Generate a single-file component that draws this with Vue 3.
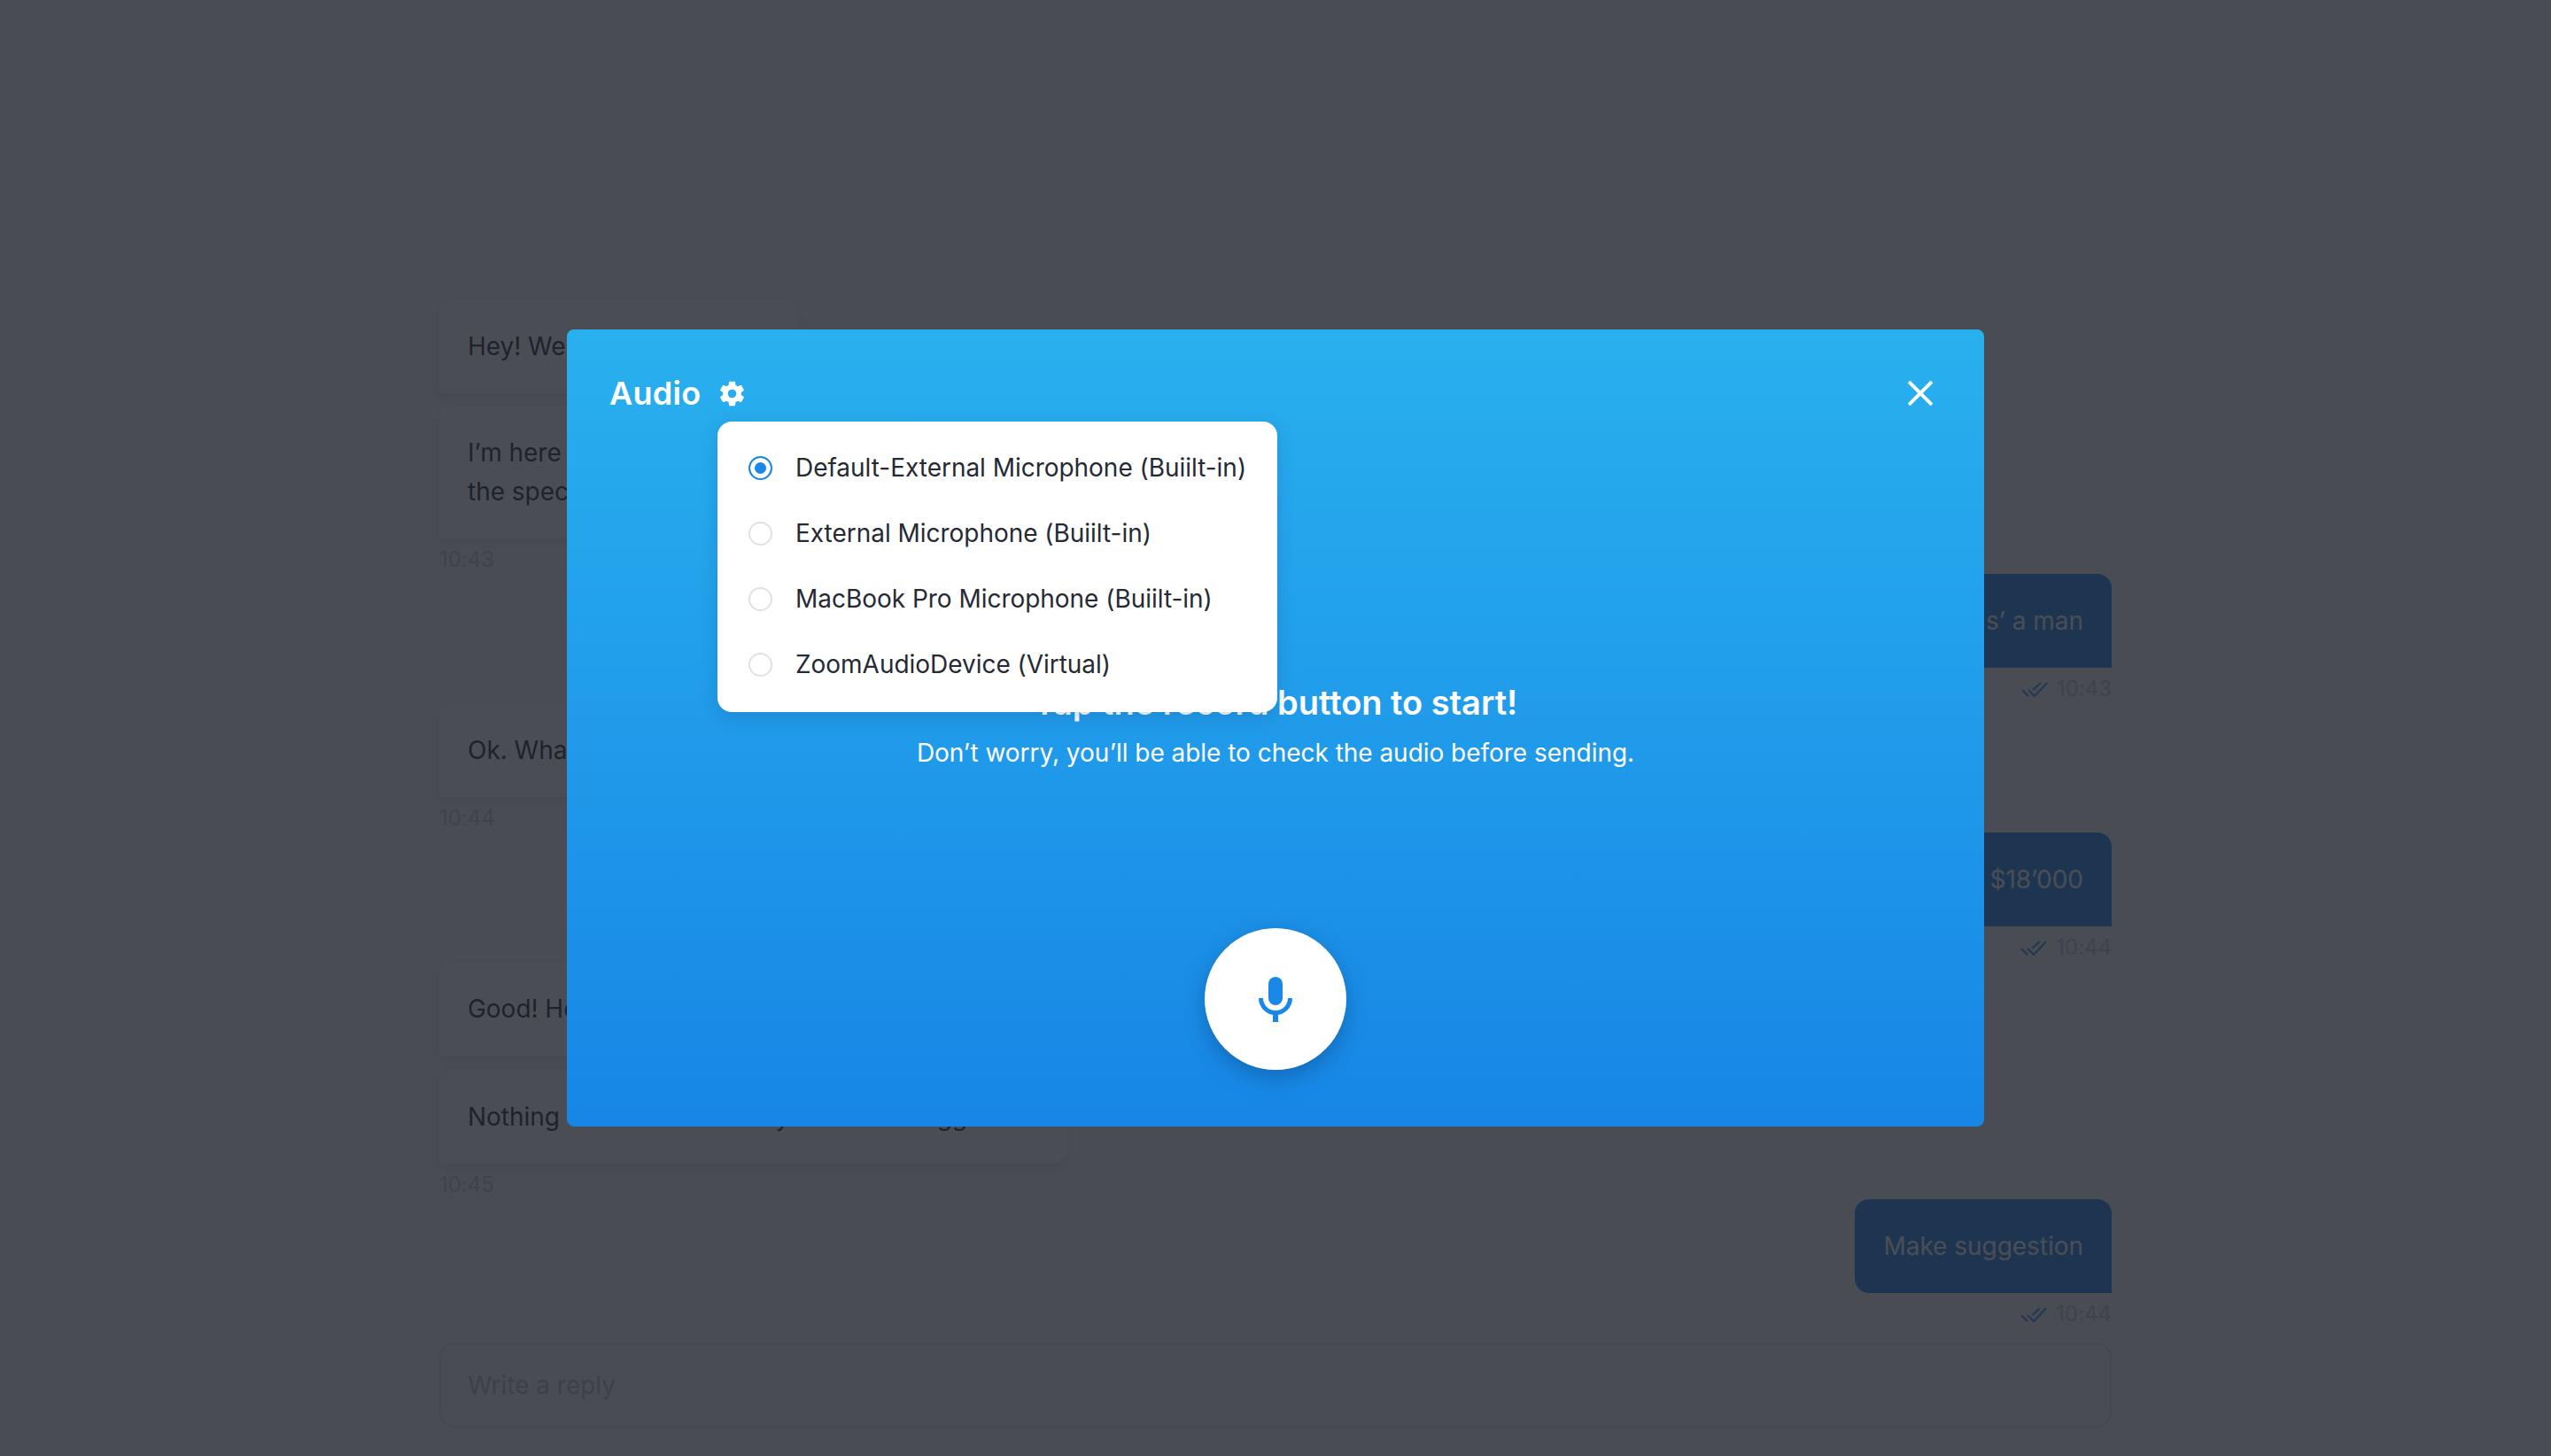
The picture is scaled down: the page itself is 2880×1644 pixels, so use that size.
<template>
  <div class="page">
    <div class="chat">
      <div class="messages">
        <div v-for="(group, i) in groups" :key="i" class="group" :class="group.mine ? 'group--mine' : ''">
          <div v-for="(line, j) in group.lines" :key="j" class="bubble">
            <div v-for="(text, k) in line" :key="k">{{ text }}</div>
          </div>
          <div class="meta">
            <svg v-if="group.mine" class="meta__check" width="30" height="17" viewBox="0 0 30 17" fill="none" stroke="currentColor" stroke-width="2">
              <path d="M1 9l7 7" />
              <path d="M8 9l7 7L29 1" />
              <path d="M13 9l9-8" />
            </svg>
            <span>{{ group.time }}</span>
          </div>
        </div>
      </div>
      <div class="reply">Write a reply</div>
    </div>

    <div class="overlay">
      <div class="modal">
        <div class="modal__head">
          <div class="modal__title">
            <span>Audio</span>
            <svg width="33" height="33" viewBox="0 0 24 24" fill="#fff">
              <path d="M19.43 12.98c.04-.32.07-.64.07-.98s-.03-.66-.07-.98l2.11-1.65a.5.5 0 0 0 .12-.64l-2-3.46a.5.5 0 0 0-.61-.22l-2.49 1a7.3 7.3 0 0 0-1.69-.98l-.38-2.65A.49.49 0 0 0 14 2h-4a.49.49 0 0 0-.49.42l-.38 2.65c-.61.25-1.17.59-1.69.98l-2.49-1a.5.5 0 0 0-.61.22l-2 3.46a.49.49 0 0 0 .12.64l2.11 1.65c-.04.32-.07.65-.07.98s.03.66.07.98l-2.11 1.65a.5.5 0 0 0-.12.64l2 3.46c.12.22.39.3.61.22l2.49-1c.52.4 1.08.73 1.69.98l.38 2.65c.03.24.24.42.49.42h4c.25 0 .46-.18.49-.42l.38-2.65c.61-.25 1.17-.59 1.69-.98l2.49 1c.23.09.49 0 .61-.22l2-3.46a.5.5 0 0 0-.12-.64l-2.11-1.65zM12 15.5a3.5 3.5 0 1 1 0-7 3.5 3.5 0 0 1 0 7z" />
            </svg>
          </div>
          <svg class="modal__close" width="28" height="28" viewBox="0 0 28 28" fill="none" stroke="#fff" stroke-width="4">
            <path d="M1 1l26 26M27 1L1 27" />
          </svg>
        </div>

        <div class="devices">
          <div v-for="(device, i) in devices" :key="device" class="device">
            <span class="radio" :class="i === 0 ? 'radio--on' : ''"></span>
            <span>{{ device }}</span>
          </div>
        </div>

        <div class="modal__body">
          <div class="modal__heading">Tap the record button to start!</div>
          <div class="modal__hint">Don’t worry, you’ll be able to check the audio before sending.</div>
        </div>

        <div class="record">
          <svg width="38" height="51" viewBox="0 0 38 51" fill="none">
            <rect x="11" y="0" width="16" height="32" rx="8" fill="#1a88e6" />
            <path d="M2.500 24a16.500 16.500 0 0 0 33 0" stroke="#1a88e6" stroke-width="5" />
            <path d="M19 41v10" stroke="#1a88e6" stroke-width="6" />
          </svg>
        </div>
      </div>
    </div>
  </div>
</template>

<script setup>
const groups = [
  {
    time: "10:43",
    lines: [["Hey! Welcome to our chat"], ["I’m here to help you find the right car,", "the specs are all on the page"]],
  },
  { mine: true, time: "10:43", lines: [["I’m looking for my sons’ a man"]] },
  { time: "10:44", lines: [["Ok. What is your budget?"]] },
  { mine: true, time: "10:44", lines: [["About $18’000"]] },
  {
    time: "10:45",
    lines: [["Good! How can I help you?"], ["Nothing at all for now. Did you have a suggestion"]],
  },
  { mine: true, time: "10:44", lines: [["Make suggestion"]] },
];

const devices = [
  "Default-External Microphone (Buiilt-in)",
  "External Microphone (Buiilt-in)",
  "MacBook Pro Microphone (Buiilt-in)",
  "ZoomAudioDevice (Virtual)",
];
</script>

<style>
html,
body {
  margin: 0;
  background: #f8f9fa;
}
</style>

<style scoped>
.page {
  position: relative;
  height: 1644px;
  overflow: hidden;
  background: #f8f9fa;
  font-family: Inter, "Liberation Sans", sans-serif;
  font-size: 28px;
  line-height: 44px;
  letter-spacing: -0.03px;
  color: #252a34;
}

.chat {
  display: flex;
  flex-direction: column;
  justify-content: flex-end;
  box-sizing: border-box;
  height: 100%;
  width: 1888px;
  margin: 0 auto;
  padding-bottom: 32px;
}

.messages {
  display: flex;
  flex-direction: column;
}

.group {
  display: flex;
  flex-direction: column;
  align-items: flex-start;
}

.group--mine {
  align-items: flex-end;
}

.bubble {
  padding: 31px 32px;
  background: #fff;
  border-radius: 16px 16px 16px 0;
  box-shadow: 0 4px 12px rgba(37, 42, 52, 0.1);
}

.bubble + .bubble {
  margin-top: 16px;
}

.group:first-child .bubble + .bubble {
  margin-top: 14px;
}

.group--mine .bubble {
  background: #1a88e6;
  color: #fff;
  border-radius: 16px 16px 0 16px;
  box-shadow: none;
}

.meta {
  display: flex;
  align-items: center;
  gap: 10px;
  height: 30px;
  margin: 9px 0 1px;
  font-size: 24px;
  line-height: 30px;
  color: #c4c7cf;
}

.meta__check {
  color: #2a96f0;
}

.reply {
  box-sizing: border-box;
  height: 96px;
  margin-top: 16px;
  padding: 24px 30px;
  border: 2px solid #e2e4e8;
  border-radius: 16px;
  color: #b9bcc5;
}

.overlay {
  position: absolute;
  inset: 0;
  display: flex;
  align-items: center;
  justify-content: center;
  background: rgba(30, 33, 43, 0.8);
}

.modal {
  position: relative;
  box-sizing: border-box;
  display: flex;
  flex-direction: column;
  align-items: center;
  width: 1600px;
  height: 900px;
  padding: 58px 48px 64px;
  background: linear-gradient(180deg, #29b0ee 0%, #1786e6 100%);
  border-radius: 8px;
  color: #fff;
}

.modal__head {
  display: flex;
  align-items: center;
  justify-content: space-between;
  align-self: stretch;
  height: 28px;
  padding-right: 10px;
}

.modal__title {
  display: flex;
  align-items: center;
  gap: 18px;
  font-size: 36px;
  font-weight: 600;
  letter-spacing: 0.3px;
}

.modal__close {
  display: block;
}

.devices {
  position: absolute;
  top: 104px;
  left: 170px;
  box-sizing: border-box;
  display: flex;
  flex-direction: column;
  justify-content: center;
  width: 632px;
  height: 328px;
  padding-bottom: 2px;
  background: #fff;
  border-radius: 16px;
  box-shadow: 0 6px 20px rgba(20, 60, 110, 0.2);
  color: #252a34;
  white-space: nowrap;
}

.device {
  display: flex;
  align-items: center;
  gap: 26px;
  height: 74px;
  padding-left: 35px;
}

.radio {
  box-sizing: border-box;
  flex: none;
  width: 27px;
  height: 27px;
  border: 2px solid #dfe1e5;
  border-radius: 50%;
}

.radio--on {
  border-color: #1a88e6;
  background: #1a88e6;
  box-shadow: inset 0 0 0 5px #fff;
}

.modal__body {
  display: flex;
  flex-direction: column;
  align-items: center;
  gap: 13px;
  margin-top: 313px;
}

.modal__heading {
  font-size: 38px;
  font-weight: 600;
}

.modal__hint {
  font-size: 28px;
}

.record {
  display: flex;
  align-items: center;
  justify-content: center;
  width: 160px;
  height: 160px;
  margin-top: auto;
  background: #fff;
  border-radius: 50%;
  box-shadow: 0 8px 24px rgba(10, 50, 100, 0.35);
}
</style>
